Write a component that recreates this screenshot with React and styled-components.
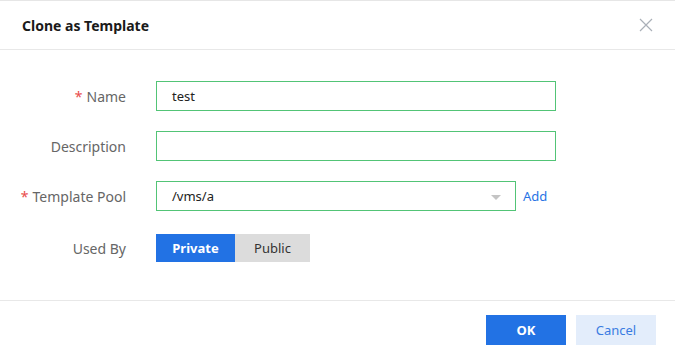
import React from 'react'
import styled, { createGlobalStyle } from 'styled-components'

const GlobalStyle = createGlobalStyle`
    html, body {
        margin: 0;
        padding: 0;
        background: #fff;
    }
    body {
        font-family: "Noto Sans", "Liberation Sans", sans-serif;
    }
`

const Dialog = styled.div`
    width: 675px;
    height: 359px;
    box-sizing: border-box;
    border-top: 1px solid #e6e6e6;
    display: flex;
    flex-direction: column;
    background: #fff;
`

const Header = styled.div`
    height: 48px;
    display: flex;
    align-items: center;
    justify-content: space-between;
    padding: 0 22px 0 22px;
    border-bottom: 1px solid #e8e8e8;
`

const Title = styled.h2`
    margin: 0;
    font-size: 14px;
    font-weight: 700;
    color: #1a1a1a;
`

const Close = styled.button`
    border: 0;
    background: none;
    padding: 0;
    width: 14px;
    height: 14px;
    display: flex;
    margin-right: 0;
    cursor: pointer;
`

const Body = styled.div`
    flex: 1;
    padding-top: 31px;
    display: flex;
    flex-direction: column;
    gap: 20px;
    border-bottom: 1px solid #e8e8e8;
`

const Row = styled.div`
    display: flex;
    align-items: center;
    height: ${(p) => p.height || 30}px;
    margin-top: ${(p) => p.offset || 0}px;
`

const Label = styled.label`
    width: 126px;
    text-align: right;
    font-size: 14px;
    color: #666;
    padding-right: 30px;
    box-sizing: content-box;
    white-space: nowrap;
`

const Star = styled.span`
    color: #e94b4b;
    margin-right: 4px;
`

const Input = styled.div`
    width: ${(p) => p.width}px;
    height: 30px;
    box-sizing: border-box;
    border: 1px solid #52c476;
    display: flex;
    align-items: center;
    justify-content: space-between;
    padding: 0 14px 0 15px;
    font-size: 13px;
    color: #222;
`

const Caret = styled.span`
    width: 0;
    height: 0;
    border-left: 5px solid transparent;
    border-right: 5px solid transparent;
    border-top: 5px solid #c4c4c4;
    margin-top: 2px;
`

const AddLink = styled.a`
    margin-left: 7px;
    font-size: 13px;
    color: #2873e4;
    cursor: pointer;
`

const Toggle = styled.div`
    display: flex;
`

const ToggleButton = styled.button`
    width: ${(p) => p.width}px;
    height: 28px;
    border: 0;
    font-family: inherit;
    font-size: 13px;
    font-weight: ${(p) => (p.active ? 700 : 400)};
    background: ${(p) => (p.active ? '#2272e4' : '#dcdcdc')};
    color: ${(p) => (p.active ? '#fff' : '#333')};
`

const Footer = styled.div`
    height: 58px;
    display: flex;
    align-items: center;
    justify-content: flex-end;
    gap: 10px;
    padding-right: 19px;
`

const FooterButton = styled.button`
    width: 80px;
    height: 30px;
    border: 0;
    font-family: inherit;
    font-size: 13px;
    font-weight: ${(p) => (p.primary ? 700 : 400)};
    background: ${(p) => (p.primary ? '#2272e4' : '#e3edfb')};
    color: ${(p) => (p.primary ? '#fff' : '#3a7ce2')};
    cursor: pointer;
`

export default function App() {
    return (
        <>
            <GlobalStyle />
            <Dialog>
                <Header>
                    <Title>Clone as Template</Title>
                    <Close aria-label="close">
                        <svg width="14" height="14" viewBox="0 0 14 14">
                            <path d="M1 1L13 13M13 1L1 13" stroke="#aab0b8" strokeWidth="1.2" fill="none" />
                        </svg>
                    </Close>
                </Header>
                <Body>
                    <Row>
                        <Label><Star>*</Star>Name</Label>
                        <Input width={400}>test</Input>
                    </Row>
                    <Row>
                        <Label>Description</Label>
                        <Input width={400} />
                    </Row>
                    <Row>
                        <Label><Star>*</Star>Template Pool</Label>
                        <Input width={360}>
                            /vms/a
                            <Caret />
                        </Input>
                        <AddLink>Add</AddLink>
                    </Row>
                    <Row height={28} offset={3}>
                        <Label>Used By</Label>
                        <Toggle>
                            <ToggleButton active width={79}>Private</ToggleButton>
                            <ToggleButton width={75}>Public</ToggleButton>
                        </Toggle>
                    </Row>
                </Body>
                <Footer>
                    <FooterButton primary>OK</FooterButton>
                    <FooterButton>Cancel</FooterButton>
                </Footer>
            </Dialog>
        </>
    )
}
